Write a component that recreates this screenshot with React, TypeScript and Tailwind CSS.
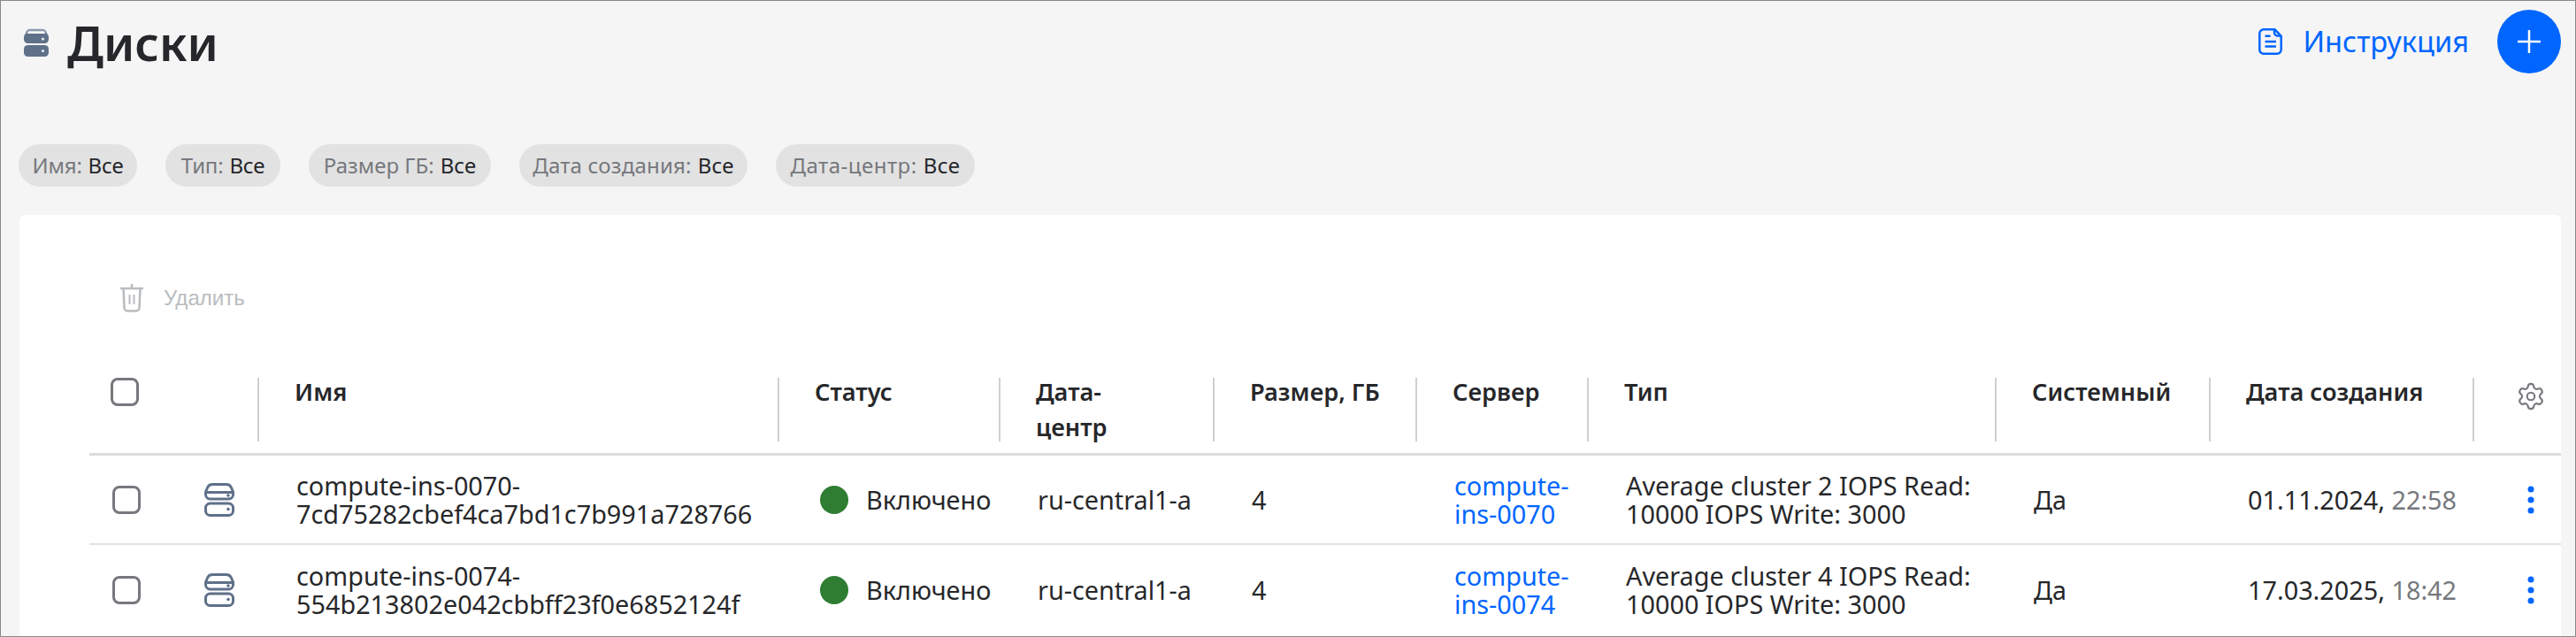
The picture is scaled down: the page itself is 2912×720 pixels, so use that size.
import React from "react";
import { Settings } from "lucide-react";

const FILTERS = [
  { label: "Имя", cls: "w-[134px] tracking-[-0.2px]" },
  { label: "Тип", cls: "w-[130px] tracking-[-0.2px]" },
  { label: "Размер ГБ", cls: "w-[206px]" },
  { label: "Дата создания", cls: "w-[258px] tracking-[0.2px]" },
  { label: "Дата-центр", cls: "w-[225px] tracking-[0.5px]" },
];

const COLUMNS = ["", "Имя", "Статус", "Дата-центр", "Размер, ГБ", "Сервер", "Тип", "Системный", "Дата создания"];

const GRID =
  "grid grid-cols-[97px_95px_588px_250px_242px_229px_194px_461px_242px_298px_98px]";

const DISKS = [
  {
    nameA: "compute-ins-0070-",
    nameB: "7cd75282cbef4ca7bd1c7b991a728766",
    serverA: "compute-",
    serverB: "ins-0070",
    type: "Average cluster 2 IOPS Read: 10000 IOPS Write: 3000",
    date: "01.11.2024,",
    time: "22:58",
  },
  {
    nameA: "compute-ins-0074-",
    nameB: "554b213802e042cbbff23f0e6852124f",
    serverA: "compute-",
    serverB: "ins-0074",
    type: "Average cluster 4 IOPS Read: 10000 IOPS Write: 3000",
    date: "17.03.2025,",
    time: "18:42",
  },
];

const DiskFilled = () => (
  <svg width="28" height="32" viewBox="0 0 28 32" className="shrink-0">
    <path
      d="M7 .8h14a5 5 0 0 1 4.6 3l.9 2.2H1.500l.9-2.200A5 5 0 0 1 7 .8z"
      fill="#8d9aad"
    />
    <path
      d="M5 5h18a5 5 0 0 1 5 5v2.500a4.500 4.500 0 0 1-4.500 4.500h-19A4.500 4.500 0 0 1 0 12.500V10a5 5 0 0 1 5-5z"
      fill="#5f7089"
    />
    <path d="M5.500 3.200h17l1.800 2.800H3.700z" fill="#f5f5f5" />
    <rect x="0" y="19" width="28" height="13" rx="4.500" fill="#5f7089" />
    <circle cx="21.500" cy="12" r="1.500" fill="#f5f5f5" />
    <circle cx="21.500" cy="25.500" r="1.500" fill="#f5f5f5" />
  </svg>
);

const DiskOutline = () => (
  <svg
    width="34"
    height="38"
    viewBox="0 0 34 38"
    fill="none"
    stroke="#5f7089"
    strokeWidth="3"
    className="shrink-0"
  >
    <path d="M9 1.500h16a6 6 0 0 1 5.400 3.500l2.100 5v3a5 5 0 0 1-5 5h-21a5 5 0 0 1-5-5v-3l2.100-5A6 6 0 0 1 9 1.500z" />
    <path d="M2 10.500h30" />
    <rect x="1.500" y="23" width="31" height="13.500" rx="5" />
    <circle cx="27" cy="14" r="1.800" fill="#5f7089" stroke="none" />
    <circle cx="27" cy="29.500" r="1.800" fill="#5f7089" stroke="none" />
  </svg>
);

const DocIcon = () => (
  <svg
    width="27"
    height="30"
    viewBox="0 0 27 30"
    fill="none"
    stroke="#0066ff"
    strokeWidth="2.500"
    className="shrink-0"
  >
    <path d="M6 1.300h12.500l7.200 7.500v15.400a4.500 4.500 0 0 1-4.500 4.500H6a4.500 4.500 0 0 1-4.700-4.500V5.800A4.500 4.500 0 0 1 6 1.300z" />
    <path d="M18 1.300v3.700a3.500 3.500 0 0 0 3.500 3.500h4.200" />
    <path d="M7.500 8.700h6M7.500 15h12.500M7.500 20.500h12.500" />
  </svg>
);

const TrashIcon = () => (
  <svg
    width="28"
    height="32"
    viewBox="0 0 28 32"
    fill="none"
    stroke="#b9bcbf"
    strokeWidth="2.500"
    className="shrink-0"
  >
    <path d="M1 5h26M14 0v5" />
    <path d="M4.500 5l1 22a3.500 3.500 0 0 0 3.500 3.500h10a3.500 3.500 0 0 0 3.500-3.500l1-22" />
    <path d="M11.500 12v11M16.500 12v11" strokeWidth="2" />
  </svg>
);

const Dots = () => (
  <svg width="8" height="32" viewBox="0 0 8 32" fill="#0066ff">
    <circle cx="4" cy="4" r="3.500" />
    <circle cx="4" cy="16" r="3.500" />
    <circle cx="4" cy="28" r="3.500" />
  </svg>
);

const Checkbox = () => (
  <span className="block w-8 h-8 rounded-[8px] border-[3px] border-[#76787d]" />
);

export default function App() {
  return (
    <div
      className="w-[2912px] h-[720px] overflow-hidden flex flex-col bg-[#f5f5f5] border border-[#888888] text-[#26272a]"
      style={{ fontFamily: '"Noto Sans", sans-serif' }}
    >
      {/* Header */}
      <div className="flex items-start justify-between pl-[26px] pr-[16px] h-[162px] shrink-0">
        <div className="flex items-center gap-[21px] mt-[15px]">
          <DiskFilled />
          <h1 className="text-[54px] leading-[64px] font-semibold">Диски</h1>
        </div>
        <div className="flex items-center mt-[10px]">
          <a className="flex items-center gap-[23px] text-[32.6px] leading-[72px] text-[#0066ff]">
            <DocIcon />
            Инструкция
          </a>
          <button
            type="button"
            className="ml-[32px] w-[72px] h-[72px] rounded-full bg-[#0066ff] flex items-center justify-center"
          >
            <svg width="26" height="26" viewBox="0 0 26 26" stroke="#fff" strokeWidth="2.500">
              <path d="M0 13h26M13 0v26" />
            </svg>
          </button>
        </div>
      </div>

      {/* Filters */}
      <div className="flex gap-8 pl-[20px] h-[48px] shrink-0">
        {FILTERS.map((f) => (
          <div
            key={f.label}
            className={`h-12 flex items-center justify-center rounded-full bg-[#e2e2e2] text-[24px] whitespace-nowrap ${f.cls}`}
          >
            <span className="text-[#76787d]">{f.label}:</span>
            <span className="ml-[7px]">Все</span>
          </div>
        ))}
      </div>

      {/* Card */}
      <div className="mt-[32px] ml-[21px] mr-[16px] flex-1 bg-white rounded-t-[6px] min-h-0">
        <div className="h-[184px] pl-[113px] pt-[77px] flex items-start">
          <div
            className="flex items-center gap-[22px] text-[24px] leading-[34px] text-[#b9bcbf]"
            style={{ fontFamily: '"Liberation Sans", sans-serif' }}
          >
            <TrashIcon />
            Удалить
          </div>
        </div>

        <div className="ml-[79px]">
          {/* Table head */}
          <div className={`${GRID} h-[88px] border-b-[3px] border-[#dcdcdc]`}>
            <div className="pl-6 h-[72px]">
              <Checkbox />
            </div>
            {COLUMNS.map((label) => (
              <div
                key={label}
                className="h-[72px] border-r-2 border-[#d0d0d0] pl-[40px] pr-3 text-[27.2px] leading-[40px] font-semibold"
              >
                <div className="-mt-[4px]">
                  {label === "Дата-центр" ? (
                    <>
                      Дата-
                      <br />
                      центр
                    </>
                  ) : (
                    label
                  )}
                </div>
              </div>
            ))}
            <div className="h-[72px] pt-[4px] pl-[47px] text-[#76787d]">
              <Settings size={34} strokeWidth={1.500} />
            </div>
          </div>

          {/* Rows */}
          {DISKS.map((d, i) => (
            <div
              key={d.nameA}
              className={`${GRID} h-[101px] items-center text-[28.8px] leading-[32px] ${
                i === 0 ? "border-b-2 border-[#e2e2e2]" : ""
              }`}
            >
              <div className="pl-[26px]">
                <Checkbox />
              </div>
              <div className="pl-[33px]">
                <DiskOutline />
              </div>
              <div className="pl-[42px]">
                {d.nameA}
                <br />
                {d.nameB}
              </div>
              <div className="pl-[46px] flex items-center gap-[20px]">
                <span className="w-8 h-8 rounded-full bg-[#2e7d32] shrink-0" />
                Включено
              </div>
              <div className="pl-[42px]">ru-central1-a</div>
              <div className="pl-[42px]">4</div>
              <div className="pl-[42px] text-[#0066ff]">
                {d.serverA}
                <br />
                {d.serverB}
              </div>
              <div className="pl-[42px] pr-4">{d.type}</div>
              <div className="pl-[42px]">Да</div>
              <div className="pl-[42px] whitespace-nowrap">
                {d.date} <span className="text-[#76787d]">{d.time}</span>
              </div>
              <div className="pl-[60px]">
                <Dots />
              </div>
            </div>
          ))}
        </div>
      </div>
    </div>
  );
}
